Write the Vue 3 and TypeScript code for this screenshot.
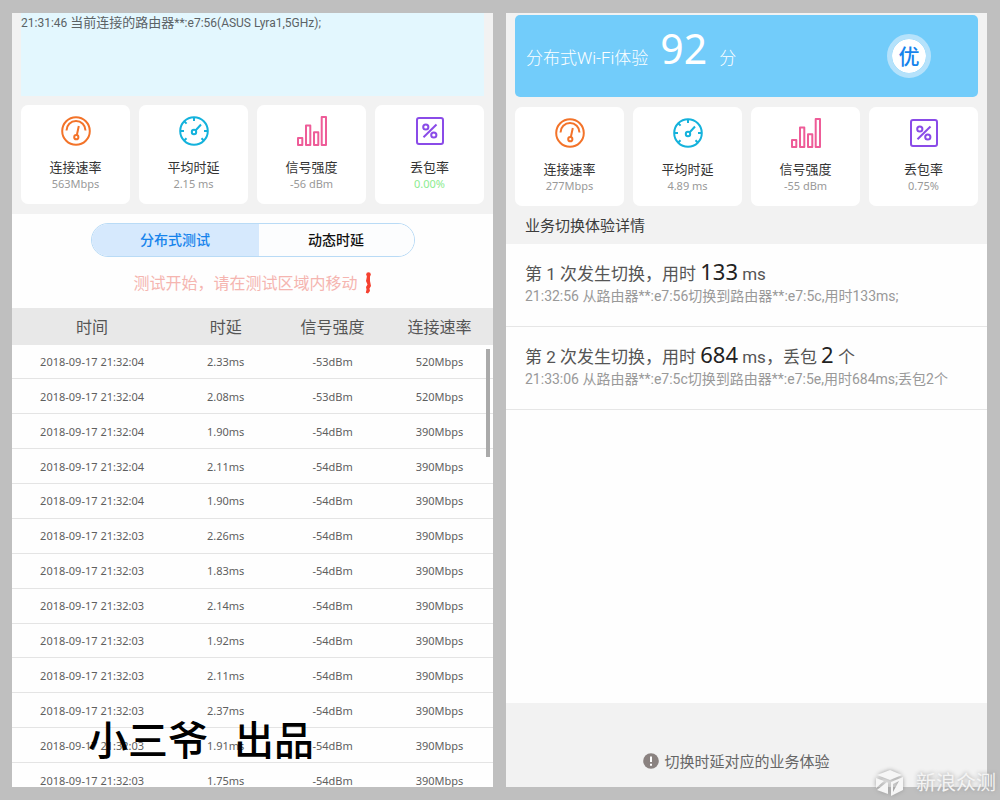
<script setup lang="ts">
import { ref } from 'vue'

type IconName = 'speed' | 'delay' | 'signal' | 'loss'

interface Metric {
  icon: IconName
  label: string
  value: string
  good?: boolean
}

interface Sample {
  time: string
  delay: string
  signal: string
  rate: string
}

interface Handover {
  index: number
  cost: number
  lost?: number
  detail: string
}

const liveMetrics: Metric[] = [
  { icon: 'speed', label: '连接速率', value: '563Mbps' },
  { icon: 'delay', label: '平均时延', value: '2.15 ms' },
  { icon: 'signal', label: '信号强度', value: '-56 dBm' },
  { icon: 'loss', label: '丢包率', value: '0.00%', good: true },
]

const resultMetrics: Metric[] = [
  { icon: 'speed', label: '连接速率', value: '277Mbps' },
  { icon: 'delay', label: '平均时延', value: '4.89 ms' },
  { icon: 'signal', label: '信号强度', value: '-55 dBm' },
  { icon: 'loss', label: '丢包率', value: '0.75%' },
]

const panels = { live: liveMetrics, result: resultMetrics }

const tabs = ['分布式测试', '动态时延']
const activeTab = ref(0)

const delays = ['2.33', '2.08', '1.90', '2.11', '1.90', '2.26', '1.83', '2.14', '1.92', '2.11', '2.37', '1.91', '1.75']
const samples: Sample[] = delays.map((d, i) => ({
  time: `2018-09-17 21:32:${i < 5 ? '04' : '03'}`,
  delay: `${d}ms`,
  signal: i < 2 ? '-53dBm' : '-54dBm',
  rate: i < 2 ? '520Mbps' : '390Mbps',
}))

const handovers: Handover[] = [
  { index: 1, cost: 133, detail: '21:32:56 从路由器**:e7:56切换到路由器**:e7:5c,用时133ms;' },
  { index: 2, cost: 684, lost: 2, detail: '21:33:06 从路由器**:e7:5c切换到路由器**:e7:5e,用时684ms;丢包2个' },
]
</script>

<template>
  <main class="frame">
    <section v-for="(metrics, name) in panels" :key="name" class="panel" :class="name">
      <div class="top">
        <p v-if="name === 'live'" class="log">21:31:46 <span>当前连接的路由器</span>**:e7:56(ASUS Lyra1,5GHz);</p>
        <div v-else class="score">
          <span class="score-label">分布式Wi-Fi体验</span>
          <strong class="score-value">92</strong>
          <span class="score-unit">分</span>
          <span class="grade">优</span>
        </div>

        <ul class="cards">
          <li v-for="m in metrics" :key="m.label" class="card">
            <svg v-if="m.icon === 'speed'" class="icon speed" viewBox="0 0 30 30">
              <circle cx="15" cy="15" r="13.800" />
              <path d="M5.500 14.500a9.500 9.500 0 0 1 19 0M17.800 10l-2 9.200" />
              <circle cx="15.300" cy="21.200" r="2.100" />
            </svg>
            <svg v-else-if="m.icon === 'delay'" class="icon delay" viewBox="0 0 30 30">
              <circle cx="15" cy="15" r="13.800" />
              <path d="M15 1v4M1 15h4M25 15h4M5.200 5.200l2.400 2.400M5.500 24.200l2-2M24.500 24.200l-2-2M16.500 14.500l5.500-6" />
              <circle cx="15" cy="16" r="2.200" />
            </svg>
            <svg v-else-if="m.icon === 'signal'" class="icon signal" viewBox="0 0 30 30">
              <path d="M1 22h4.300v7H1zM9 9.500h4.300V29H9zM17 16.300h4.300V29H17zM24.700 1H29v28h-4.300z" />
            </svg>
            <svg v-else class="icon loss" viewBox="0 0 30 30">
              <rect x="2" y="2" width="26" height="26" rx="2" />
              <path d="M21.500 8.500l-13 12.700" />
              <circle cx="10.800" cy="11" r="2.600" />
              <circle cx="18.800" cy="19" r="2.600" />
            </svg>
            <span class="card-label">{{ m.label }}</span>
            <span class="card-value" :class="{ good: m.good }">{{ m.value }}</span>
          </li>
        </ul>

        <h2 v-if="name === 'result'" class="heading">业务切换体验详情</h2>
      </div>

      <template v-if="name === 'live'">
        <div class="tabs">
          <button
            v-for="(tab, i) in tabs"
            :key="tab"
            type="button"
            class="tab"
            :class="{ active: i === activeTab }"
            :aria-pressed="i === activeTab"
            @click="activeTab = i"
          >{{ tab }}</button>
        </div>
        <p class="hint">
          测试开始，请在测试区域内移动
          <svg class="walker" viewBox="0 0 8 22">
            <circle cx="4.500" cy="2.600" r="2.300" />
            <path d="M3 4h3v5l1 5-1.500 2.500.5 2.500-2 2.500-2.200-.800.700-3.200L2 15l1.500-2.500L2 9z" />
          </svg>
        </p>
        <div class="samples">
          <table>
            <colgroup>
              <col class="wide" />
              <col span="3" />
            </colgroup>
            <thead>
              <tr>
                <th>时间</th>
                <th>时延</th>
                <th>信号强度</th>
                <th>连接速率</th>
              </tr>
            </thead>
            <tbody>
              <tr v-for="(s, i) in samples" :key="i">
                <td>{{ s.time }}</td>
                <td>{{ s.delay }}</td>
                <td>{{ s.signal }}</td>
                <td>{{ s.rate }}</td>
              </tr>
            </tbody>
          </table>
          <span class="thumb"></span>
        </div>
      </template>

      <template v-else>
        <ol class="handovers">
          <li v-for="h in handovers" :key="h.index">
            <p class="summary">
              第 {{ h.index }} 次发生切换，用时 <b>{{ h.cost }}</b> ms<template v-if="h.lost">，丢包 <b>{{ h.lost }}</b> 个</template>
            </p>
            <p class="detail">{{ h.detail }}</p>
          </li>
        </ol>
        <footer class="footer">
          <svg class="info" viewBox="0 0 16 16">
            <circle cx="8" cy="8" r="7.800" />
            <path d="M8 3.500v5.500M8 10.800v1.900" />
          </svg>
          切换时延对应的业务体验
        </footer>
      </template>
    </section>

    <div class="author"><span>小三爷</span><span>出品</span></div>
    <div class="brand">
      <svg class="cube" viewBox="0 0 30 28">
        <path d="M15 1l12 5-12 5L2 6z" />
        <path d="M1 9l8 3-8 7zM2 21l10-8 1 1v11z" />
        <path d="M16 13l12-5v13l-12 6zM24 12l-6 3v8z" fill-rule="evenodd" />
      </svg>
      <span>新浪众测</span>
    </div>
  </main>
</template>

<style>
body {
  margin: 0;
}
</style>

<style scoped>
.frame {
  position: relative;
  display: grid;
  grid-template-columns: 1fr 1fr;
  gap: 13px;
  box-sizing: border-box;
  height: 100vh;
  padding: 13px 13px 13px 12px;
  overflow: hidden;
  background: #bfbfbf;
  color: #555;
  font-family: "Noto Sans", "Noto Sans CJK SC", sans-serif;
}

p, ul, ol, h2 {
  margin: 0;
  padding: 0;
  list-style: none;
}

.panel {
  display: flex;
  flex-direction: column;
  min-width: 0;
  min-height: 0;
  overflow: hidden;
  background: #fefefe;
}

.top {
  flex: none;
  padding: 0 9px;
  background: #f2f2f2;
}

.live .top {
  padding-bottom: 10px;
}

.result .top {
  padding-top: 2px;
}

.log {
  height: 83px;
  background: #e3f7fe;
  color: #5b6265;
  font-family: Roboto, "Noto Sans CJK SC", sans-serif;
  font-size: 12px;
  line-height: 20px;
}

.log span {
  font-size: 13px;
}

.score {
  display: flex;
  align-items: center;
  box-sizing: border-box;
  height: 82px;
  padding: 0 47px 0 11px;
  border-radius: 5px;
  background: #72ccfa;
  color: #fff;
}

.score-label, .score-unit {
  font-size: 17px;
  font-family: Roboto, "Noto Sans CJK SC", sans-serif;
  font-weight: 300;
}

.score-value {
  margin: 0 12px 16px;
  font-size: 41px;
  font-weight: 400;
  line-height: 48px;
}

.grade {
  display: grid;
  place-items: center;
  width: 34px;
  height: 34px;
  margin-left: auto;
  border: 5px solid #b5e2fb;
  border-radius: 50%;
  background: #fff;
  background-clip: padding-box;
  color: #1583ec;
  font-size: 21px;
  font-weight: 500;
  line-height: 34px;
}

.cards {
  display: grid;
  grid-template-columns: repeat(4, 1fr);
  gap: 9px;
  padding-top: 10px;
}

.live .cards {
  padding-top: 9px;
}

.card {
  display: flex;
  flex-direction: column;
  align-items: center;
  box-sizing: border-box;
  height: 99px;
  padding-top: 11px;
  border-radius: 7px;
  background: #fff;
}

.icon {
  width: 30px;
  height: 30px;
  fill: none;
  stroke-width: 2;
}

.speed { stroke: #f37329; }
.delay { stroke: #14b2dc; }
.signal { stroke: #ee5c98; stroke-linejoin: round; }
.loss { stroke: #8a4be8; }

.card-label {
  margin-top: 11px;
  color: #333;
  font-size: 13px;
  line-height: 20px;
}

.card-value {
  color: #999;
  font-size: 11px;
  line-height: 14px;
}

.good {
  color: #8cec8f;
}

.heading {
  padding-left: 10px;
  color: #3c3c3c;
  font-size: 15px;
  font-weight: 400;
  line-height: 38px;
}

.tabs {
  display: flex;
  flex: none;
  align-self: center;
  box-sizing: border-box;
  width: 324px;
  height: 34px;
  margin-top: 9px;
  overflow: hidden;
  border: 1px solid #b9dbf6;
  border-radius: 17px;
}

.tab {
  flex: 155;
  padding: 0;
  border: 0;
  background: #fcfdfe;
  color: #111;
  font: 500 14px/32px "Noto Sans", "Noto Sans CJK SC", sans-serif;
}

.tab.active {
  flex: 167;
  background: #d6e9fd;
  color: #1583ec;
}

.hint {
  display: flex;
  flex: none;
  align-items: center;
  justify-content: center;
  gap: 6px;
  height: 51px;
  color: #f5b5b0;
  font-size: 16px;
  line-height: 24px;
}

.walker {
  width: 8px;
  height: 22px;
  fill: #f5402f;
}

.samples {
  position: relative;
  flex: 1;
  min-height: 0;
  overflow: hidden;
}

table {
  width: 100%;
  height: 490px;
  border-collapse: collapse;
  table-layout: fixed;
}

.wide {
  width: 33.3%;
}

th {
  height: 37px;
  padding: 0;
  background: #e8e8e8;
  font-size: 16px;
  font-weight: 400;
  line-height: 20px;
}

td {
  padding: 1px 0 0;
  border-bottom: 1px solid #e4e4e4;
  color: #5f5f5f;
  font-size: 11px;
  line-height: 16px;
  text-align: center;
}

.thumb {
  position: absolute;
  top: 41px;
  right: 3px;
  width: 4px;
  height: 108px;
  background: #aaa;
}

.handovers {
  flex: 1;
}

.handovers li {
  box-sizing: border-box;
  height: 83px;
  padding: 15px 19px 0;
  border-bottom: 1px solid #e6e6e6;
}

.summary {
  font-family: Roboto, "Noto Sans CJK SC", sans-serif;
  font-size: 17px;
  line-height: 24px;
}

.summary b {
  color: #222;
  font-family: "Noto Sans", sans-serif;
  font-size: 22px;
  font-weight: 400;
}

.detail {
  color: #999;
  font-family: Roboto, "Noto Sans CJK SC", sans-serif;
  font-size: 14px;
  line-height: 20px;
}

.footer {
  display: flex;
  flex: none;
  align-items: center;
  justify-content: center;
  gap: 5px;
  box-sizing: border-box;
  height: 84px;
  padding: 31px 20px 0 0;
  background: #f2f2f2;
  color: #666;
  font-size: 15px;
}

.info {
  width: 16px;
  height: 16px;
  fill: #8a8280;
}

.info path {
  stroke: #fff;
  stroke-width: 2;
}

.author {
  position: absolute;
  bottom: 32px;
  left: 88px;
  display: flex;
  gap: 26px;
  color: #000;
  font-size: 40px;
  font-weight: 500;
  line-height: 56px;
}

.brand {
  position: absolute;
  right: 4px;
  bottom: 3px;
  display: flex;
  align-items: center;
  gap: 11px;
  color: #f4f4f4;
  font-size: 20px;
  line-height: 28px;
  text-shadow: 0 0 4px #999;
}

.cube {
  width: 30px;
  height: 28px;
  fill: #f6f6f6;
  filter: drop-shadow(0 0 2px #999);
}
</style>
